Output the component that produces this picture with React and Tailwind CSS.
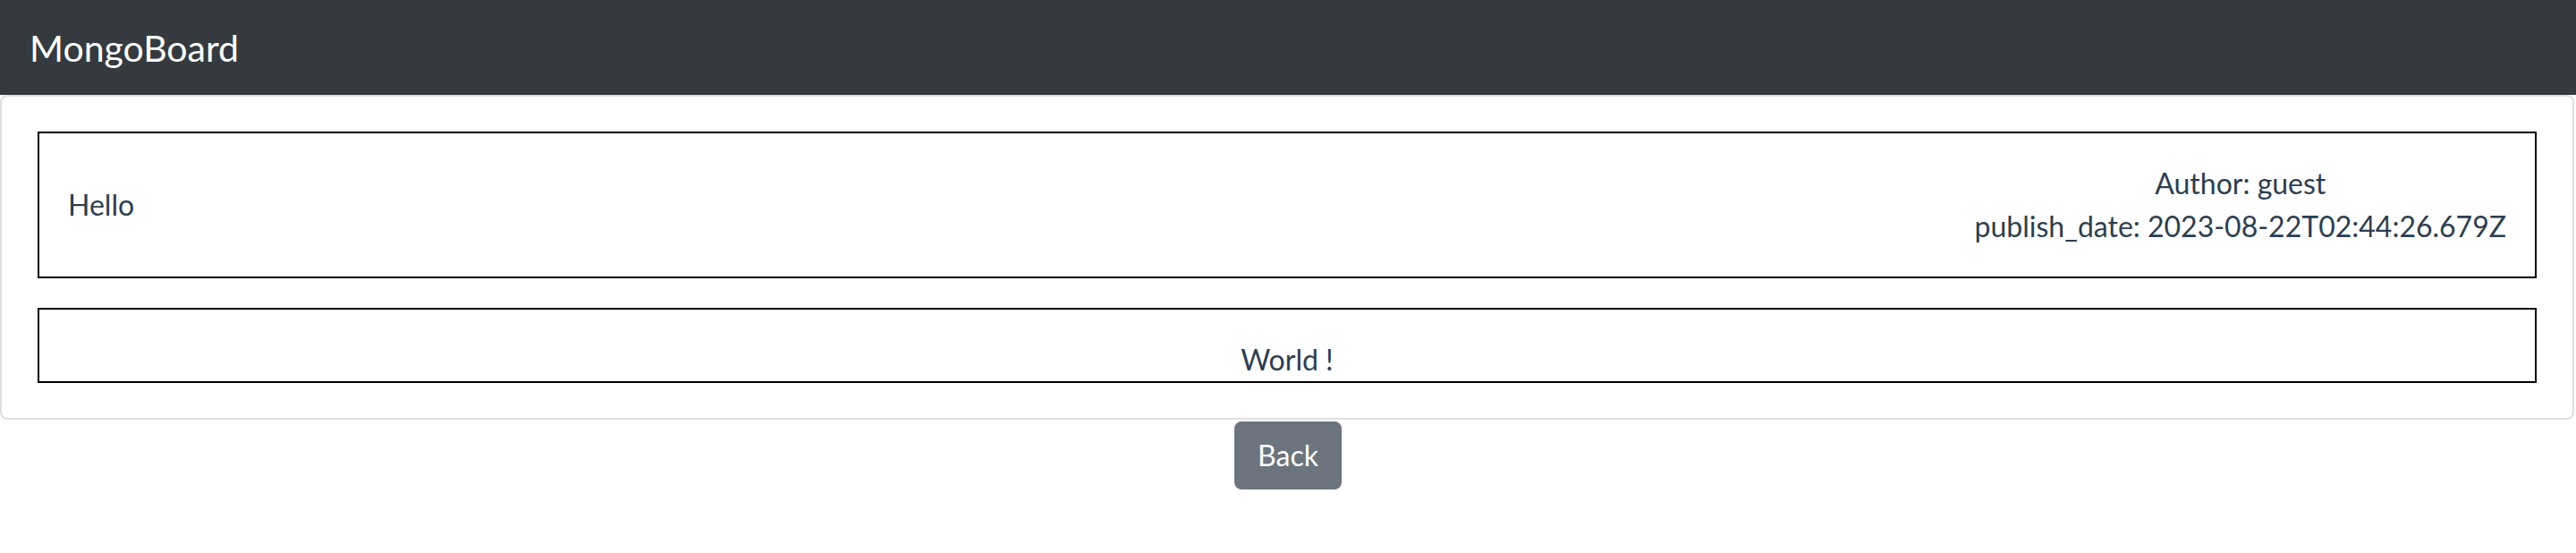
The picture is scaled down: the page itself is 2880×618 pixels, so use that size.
export default function App() {
  return (
    <div className="min-h-screen bg-white font-['Lato','Open_Sans',sans-serif] text-[32px] leading-[1.5] text-[#2c3e50]">
      {/* Navbar */}
      <nav className="flex h-[106px] items-center bg-[#343a40] px-[33px]">
        <span className="text-[41px] leading-none text-white">MongoBoard</span>
      </nav>

      {/* Post card */}
      <div className="mr-[2px] rounded-lg border-2 border-[#dfdfdf] px-[40px] py-[39px]">
        <div className="flex items-center justify-between border-2 border-black p-[32px]">
          <div className="text-left">Hello</div>
          <div className="text-center">
            <div>Author: guest</div>
            <div>publish_date: 2023-08-22T02:44:26.679Z</div>
          </div>
        </div>
        <div className="mt-[33px] border-2 border-black pt-[32px] text-center">
          World !
        </div>
      </div>

      <div className="mt-[2px] flex justify-center">
        <button className="rounded-lg border-2 border-[#6c757d] bg-[#6c757d] px-[24px] py-[12px] text-white">
          Back
        </button>
      </div>
    </div>
  );
}
